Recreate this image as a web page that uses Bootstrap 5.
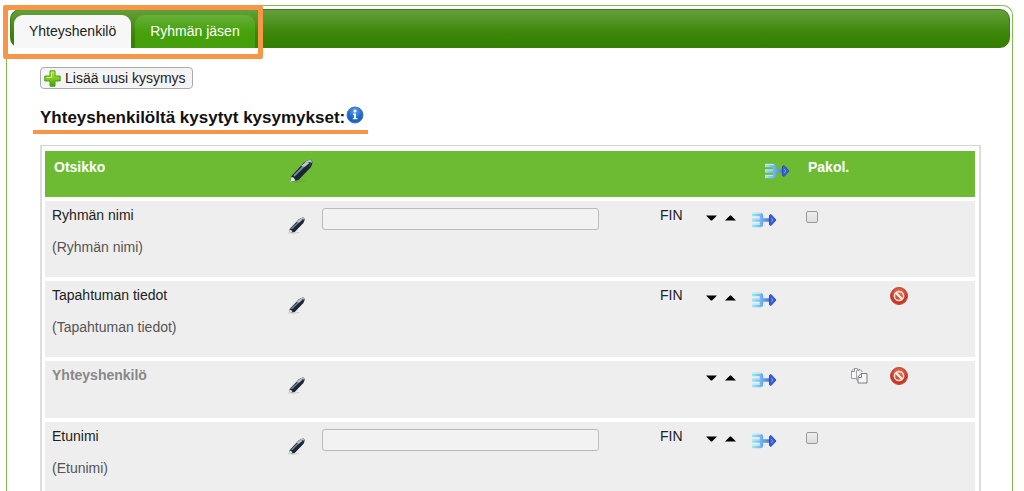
<!DOCTYPE html>
<html lang="fi">
<head>
<meta charset="utf-8">
<meta name="viewport" content="width=device-width, initial-scale=1">
<title>Yhteyshenkilö</title>
<link href="https://cdn.jsdelivr.net/npm/bootstrap@5.3.0/dist/css/bootstrap.min.css" rel="stylesheet">
<style>
body { font-family: "Liberation Sans", Arial, sans-serif; font-size: 14px; line-height: 20px; color: #222; background: #fff; }
.panel { margin: 5px 11px 0 6px; padding: 3px 2px 0 3px; border: 1px solid #85b84e; border-bottom: 0; border-radius: 10px 10px 0 0; }
.tab-bar { height: 39px; padding: 5px 3px 0; border: 1px solid #3c7d14; border-radius: 10px; background: linear-gradient(#639f3a, #3b8508 65%, #358000); }
.tab-bar .nav-link { height: 33px; padding: 6px 15px 7px; border: 0; border-radius: 9px 9px 0 0; color: #fff; background: linear-gradient(#66af38, #45a009 55%, #459f0a); }
.tab-bar .nav-link.active { color: #222; background: #f7f7f7; }
.marker { position: absolute; inset: -5px auto auto -8px; width: 260px; height: 54px; border: 5px solid #f79646; border-radius: 2px; pointer-events: none; }
.content { padding: 19px 29px 0 30px; }
.add-btn { height: 22px; padding: 0 6px 0 3px; border: 1px solid #aaa; border-radius: 4px; background: #f4f4f4; font-size: 14px; line-height: 20px; color: #222; }
.heading { margin: 17px 0 0 -7px; padding: 0 4px 0 7px; border-bottom: 4px solid #f79646; font-size: 17px; line-height: 24px; font-weight: 700; color: #111; }
.table-frame { margin-top: 11px; padding: 1px 4px 0 3px; border: 1px solid #d4d4d4; border-left: 2px solid #ddd; border-right: 2px solid #ddd; border-bottom: 0; }
.questions { width: 100%; min-width: 780px; table-layout: fixed; border-collapse: separate; border-spacing: 0 4px; }
.questions th, .questions td { padding: 4px 4px 0; vertical-align: top; }
.questions th { height: 46px; padding-top: 6px; background: #6dbb33; color: #fff; }
.questions td { height: 76px; background: #eee; }
.questions .section td { height: 57px; }
.questions th:first-child { padding-left: 9px; }
.questions td:first-child { padding-left: 7px; }
.hint { margin-top: 12px; color: #555; }
.section-title { color: #888; font-weight: 700; }
.w-title { width: 238px; } .w-pen { width: 35px; } .w-lang { width: 46px; } .w-sort { width: 45px; }
.w-merge { width: 53px; } .w-check { width: 45px; } .w-copy { width: 40px; } .w-last { width: 90px; }
.questions td.field { padding: 7px 57px 0 4px; }
.answer { height: 22px; padding: 0 4px; border: 1px solid #bbb; border-radius: 3px; background: #f2f2f3; }
.tool { padding: 0; border: 0; background: none; line-height: 0; }
.questions td .tool { margin-top: 7px; }
.questions td .tool.pen { margin: 12px 0 0 1px; }
.questions th .tool.pen { margin: 2px 0 0 2px; }
.questions th .tool.merge { margin: 6px 0 0 13px; }
.questions td .tool.sort { margin-top: 10px; }
.questions td .tool.remove { margin: 1px 0 0 1px; }
.questions td .tool.copy { margin: 1px 0 0 2px; }
.req { appearance: none; width: 12px; height: 12px; margin: 6px 0 0 2px; border: 1px solid #999; border-radius: 2px; background: linear-gradient(#eee, #ddd); }
.req:checked { background: #4a8; }
</style>
</head>
<body>
<svg class="position-absolute" width="0" height="0" aria-hidden="true">
  <defs>
    <linearGradient id="gPlus" x2="0" y2="1"><stop stop-color="#c4f03c"/><stop offset="1" stop-color="#3fa20f"/></linearGradient>
    <linearGradient id="gMerge" gradientUnits="userSpaceOnUse" x1="0" y1="0" x2="25" y2="0"><stop stop-color="#a6ecfa"/><stop offset=".4" stop-color="#72b4ee"/><stop offset="1" stop-color="#2e50c0"/></linearGradient>
    <radialGradient id="gStop" cy=".3"><stop stop-color="#f47a5a"/><stop offset="1" stop-color="#cf3520"/></radialGradient>
    <radialGradient id="gInfo" cy=".25"><stop stop-color="#5da5ee"/><stop offset="1" stop-color="#1f62c4"/></radialGradient>
  </defs>
  <symbol id="pen" viewBox="0 0 24 24">
    <path d="M5 23.2 16 22" stroke="#777" stroke-opacity=".3" stroke-width="1.5"/>
    <path d="M1 23 2.500 17 15 3.500Q20 0 22.500 1 24.500 3 22 8L9.500 21Z" fill="#1b2634"/>
    <path d="M1 23 2.500 18 4.500 18.500 6.500 21.500Z" fill="#dfe8e8"/>
    <path d="M5 17 16.500 5.500" stroke="#71879d" stroke-width="2"/>
    <path d="M12 7 17 2.500Q20 .3 22 1 23.600 2 22.600 4L20.500 4 15.500 8Z" fill="#b9c3ca"/>
    <path d="M20.500 8 21.500 3.500 19.500 3.500" fill="none" stroke="#33414f"/>
  </symbol>
  <symbol id="merge" viewBox="0 0 26 16">
    <path d="M1 2.500H9Q10.500 2.500 10.500 4V12Q10.500 13.500 9 13.500H1M1 8H20" fill="none" stroke="url(#gMerge)" stroke-width="3.500"/>
    <path d="M1 1.500H10M1 7H9M1 12.500H9" stroke="#c8f5fb" stroke-opacity=".7"/>
    <path d="M18.500 3.500 20 2.500 25 8 20 13.500 18.500 12.500Z" fill="#3c60cf" stroke="#2d4bb4"/>
    <path d="M20 6 22 8 20 10" fill="none" stroke="#7797ea"/>
  </symbol>
  <symbol id="stop" viewBox="0 0 18 18">
    <circle cx="9" cy="9" r="8.500" fill="url(#gStop)" stroke="#b84a38"/>
    <circle cx="9" cy="9" r="4.600" fill="none" stroke="#fff" stroke-opacity=".9" stroke-width="1.500"/>
    <path d="M5.800 5.800 12.200 12.200" stroke="#fff" stroke-width="2"/>
  </symbol>
  <symbol id="copy" viewBox="0 0 17 16">
    <path d="M3 .5H6.500V10.500H.5V3Z" fill="#f8f8f8" stroke="#999da8"/>
    <path d="M.8 3.500H3.500V.8M7.500 1.500H9L11.500 4" fill="none" stroke="#888d99"/>
    <path d="M8.500 2.500H5.500V12H10" fill="#f4f4f6" stroke="#a5a8b2"/>
    <path d="M10 5.500H16V15H7V9Z" fill="#f8f8f8" stroke="#777b87"/>
    <path d="M7.500 9.500H10.500V6" fill="none" stroke="#777b87"/>
  </symbol>
  <symbol id="down" viewBox="0 0 11 6"><path d="M0 .5H11L6 5.500H5Z"/></symbol>
  <symbol id="up" viewBox="0 0 11 6"><path d="M0 5.500H11L6 .5H5Z"/></symbol>
</svg>

<main class="panel">
  <nav class="tab-bar position-relative">
    <ul class="nav gap-1">
      <li class="nav-item"><a class="nav-link active" href="#" aria-current="page">Yhteyshenkilö</a></li>
      <li class="nav-item"><a class="nav-link" href="#">Ryhmän jäsen</a></li>
    </ul>
    <div class="marker"></div>
  </nav>

  <div class="content">
    <button type="button" class="add-btn d-flex align-items-center gap-1">
      <svg width="17" height="17" viewBox="0 0 17 17" aria-hidden="true"><path d="M6 .8H11V6H16.200V11H11V16.200H6V11H.8V6H6Z" fill="url(#gPlus)" stroke="#4c9d1c"/><path d="M7.500 2.500V7.500H2.500" fill="none" stroke="#e4ff9c" stroke-opacity=".7"/></svg>
      <span>Lisää uusi kysymys</span>
    </button>

    <div class="d-flex">
      <h2 class="heading d-flex">
        <span>Yhteyshenkilöltä kysytyt kysymykset:</span>
        <svg width="19" height="19" viewBox="-1 0 19 19" role="img" aria-label="Ohje"><circle cx="9" cy="9" r="8" fill="url(#gInfo)" stroke="#3c78c8"/><circle cx="9" cy="5" r="1.500" fill="#fff"/><path d="M7 7.500H10V12H11.500V13.200H6.800V12H8V8.700H7Z" fill="#fff"/></svg>
      </h2>
    </div>

    <div class="table-frame table-responsive">
      <table class="questions">
        <colgroup><col class="w-title"><col class="w-pen"><col><col class="w-lang"><col class="w-sort"><col class="w-merge"><col class="w-check"><col class="w-copy"><col class="w-last"></colgroup>
        <thead>
          <tr>
            <th>Otsikko</th>
            <th><button type="button" class="tool pen" aria-label="Muokkaa"><svg width="24" height="24"><use href="#pen"/></svg></button></th>
            <th colspan="3"></th>
            <th><button type="button" class="tool merge" aria-label="Yhdistä"><svg width="26" height="16"><use href="#merge"/></svg></button></th>
            <th colspan="3" class="ps-2">Pakol.</th>
          </tr>
        </thead>
        <tbody>
          <tr>
            <td><label for="q1">Ryhmän nimi</label><div class="hint">(Ryhmän nimi)</div></td>
            <td><button type="button" class="tool pen" aria-label="Muokkaa"><svg width="17" height="17"><use href="#pen"/></svg></button></td>
            <td class="field"><input id="q1" type="text" class="answer w-100 d-block"></td>
            <td>FIN</td>
            <td><div class="d-flex gap-2"><button type="button" class="tool sort" aria-label="Alas"><svg width="11" height="6"><use href="#down"/></svg></button><button type="button" class="tool sort" aria-label="Ylös"><svg width="11" height="6"><use href="#up"/></svg></button></div></td>
            <td><button type="button" class="tool merge" aria-label="Yhdistä"><svg width="26" height="16"><use href="#merge"/></svg></button></td>
            <td><input type="checkbox" class="req d-block" aria-label="Pakollinen"></td>
            <td></td>
            <td></td>
          </tr>
          <tr>
            <td>Tapahtuman tiedot<div class="hint">(Tapahtuman tiedot)</div></td>
            <td><button type="button" class="tool pen" aria-label="Muokkaa"><svg width="17" height="17"><use href="#pen"/></svg></button></td>
            <td></td>
            <td>FIN</td>
            <td><div class="d-flex gap-2"><button type="button" class="tool sort" aria-label="Alas"><svg width="11" height="6"><use href="#down"/></svg></button><button type="button" class="tool sort" aria-label="Ylös"><svg width="11" height="6"><use href="#up"/></svg></button></div></td>
            <td><button type="button" class="tool merge" aria-label="Yhdistä"><svg width="26" height="16"><use href="#merge"/></svg></button></td>
            <td></td>
            <td></td>
            <td><button type="button" class="tool remove" aria-label="Poista"><svg width="18" height="18"><use href="#stop"/></svg></button></td>
          </tr>
          <tr class="section">
            <td><span class="section-title">Yhteyshenkilö</span></td>
            <td><button type="button" class="tool pen" aria-label="Muokkaa"><svg width="17" height="17"><use href="#pen"/></svg></button></td>
            <td></td>
            <td></td>
            <td><div class="d-flex gap-2"><button type="button" class="tool sort" aria-label="Alas"><svg width="11" height="6"><use href="#down"/></svg></button><button type="button" class="tool sort" aria-label="Ylös"><svg width="11" height="6"><use href="#up"/></svg></button></div></td>
            <td><button type="button" class="tool merge" aria-label="Yhdistä"><svg width="26" height="16"><use href="#merge"/></svg></button></td>
            <td></td>
            <td><button type="button" class="tool copy" aria-label="Kopioi"><svg width="17" height="16"><use href="#copy"/></svg></button></td>
            <td><button type="button" class="tool remove" aria-label="Poista"><svg width="18" height="18"><use href="#stop"/></svg></button></td>
          </tr>
          <tr>
            <td><label for="q2">Etunimi</label><div class="hint">(Etunimi)</div></td>
            <td><button type="button" class="tool pen" aria-label="Muokkaa"><svg width="17" height="17"><use href="#pen"/></svg></button></td>
            <td class="field"><input id="q2" type="text" class="answer w-100 d-block"></td>
            <td>FIN</td>
            <td><div class="d-flex gap-2"><button type="button" class="tool sort" aria-label="Alas"><svg width="11" height="6"><use href="#down"/></svg></button><button type="button" class="tool sort" aria-label="Ylös"><svg width="11" height="6"><use href="#up"/></svg></button></div></td>
            <td><button type="button" class="tool merge" aria-label="Yhdistä"><svg width="26" height="16"><use href="#merge"/></svg></button></td>
            <td><input type="checkbox" class="req d-block" aria-label="Pakollinen"></td>
            <td></td>
            <td></td>
          </tr>
        </tbody>
      </table>
    </div>
  </div>
</main>
<script src="https://cdn.jsdelivr.net/npm/bootstrap@5.3.0/dist/js/bootstrap.bundle.min.js"></script>
</body>
</html>
